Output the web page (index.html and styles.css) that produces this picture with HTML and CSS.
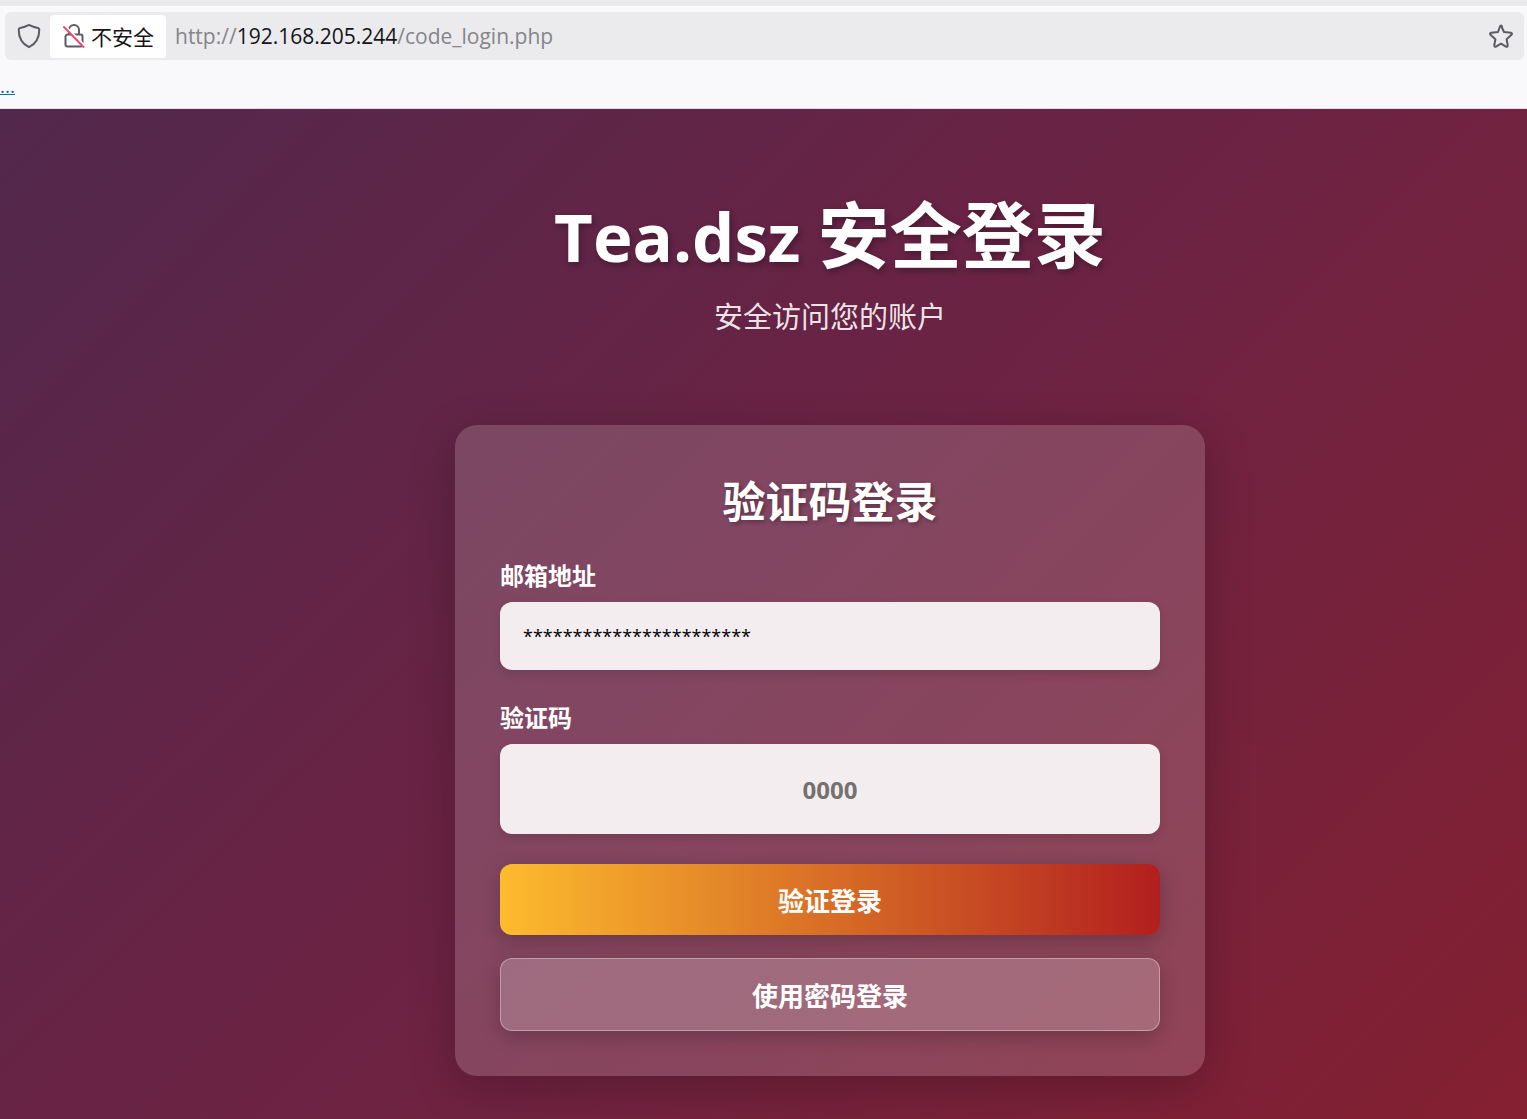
FILE: index.html
```html
<!DOCTYPE html>
<html lang="zh-CN">
<head>
<meta charset="utf-8">
<meta name="viewport" content="width=device-width, initial-scale=1">
<title>Tea.dsz 安全登录</title>
<link rel="stylesheet" href="styles.css">
</head>
<body>
<header class="browser">
  <div class="toolbar">
    <div class="urlbar">
      <svg class="icon shield" viewBox="0 0 24 26" aria-hidden="true"><path d="M12 2 C13.500 2 14 3.600 21 5 Q22.300 5.300 22.300 6.600 C22.300 15 19 21 12 24.200 C5 21 1.700 15 1.700 6.600 Q1.700 5.300 3 5 C10 3.600 10.500 2 12 2Z"/></svg>
      <button class="security" type="button">
        <svg class="icon lock" viewBox="0 0 22 26" aria-hidden="true"><path d="M6 11V7a5 5 0 0 1 10 0V11M4.500 11.500h13a2 2 0 0 1 2 2v8a2 2 0 0 1-2 2h-13a2 2 0 0 1-2-2v-8a2 2 0 0 1 2-2Z"/><path class="halo" d="M2.500 3.500 22 23"/><path class="slash" d="M1 4 20.500 24"/></svg>
        <span>不安全</span>
      </button>
      <div class="address">http://<span class="host">192.168.205.244</span>/code_login.php</div>
      <svg class="icon star" viewBox="0 0 26 26" aria-hidden="true"><path d="M13 2.500 16 9l6.800.8c1.300.2 1.500 1.300.7 2L18.600 16.300l1.100 6c.2 1.300-.8 1.800-1.700 1.300L13 20.700l-5 2.900c-.9.500-1.900 0-1.700-1.300l1.100-6L2.500 11.800c-.8-.7-.6-1.800.7-2L10 9l2-5.500c.5-1.200 1.500-1.200 2 0"/></svg>
    </div>
  </div>
  <nav class="bookmarks"><a href="#">...</a></nav>
</header>
<main class="page">
  <div class="content">
    <h1><span class="brand">Tea.dsz </span>安全登录</h1>
    <p class="subtitle">安全访问您的账户</p>
    <form class="card">
      <h2>验证码登录</h2>
      <div class="field">
        <label for="email">邮箱地址</label>
        <input id="email" type="text" value="***********************">
      </div>
      <div class="field">
        <label for="code">验证码</label>
        <input id="code" class="code" type="text" placeholder="0000">
      </div>
      <div class="actions">
        <button class="btn primary" type="button">验证登录</button>
        <button class="btn secondary" type="button">使用密码登录</button>
      </div>
    </form>
  </div>
</main>
</body>
</html>
```
FILE: styles.css
```css
* { box-sizing: border-box; }

body {
  margin: 0;
  min-height: 100vh;
  display: flex;
  flex-direction: column;
  font-family: "Open Sans", "Noto Sans CJK SC", sans-serif;
}

button, input { font-family: inherit; }

.browser {
  background: #f9f9fb;
  border-top: 6px solid #e9e9ec;
  border-bottom: 1px solid #e8dde6;
}

.toolbar { padding: 6px 3px 0 5px; }

.urlbar {
  display: flex;
  align-items: center;
  height: 48px;
  padding: 0 10px 0 12px;
  border-radius: 6px;
  background: #ebebed;
}

.icon {
  flex: none;
  fill: none;
  stroke: #5b5b62;
  stroke-width: 2;
  stroke-linecap: round;
  stroke-linejoin: round;
}

.shield { width: 24px; height: 26px; }
.lock { width: 22px; height: 26px; }
.star { width: 26px; height: 26px; }
.lock .halo { stroke: #fff; }
.lock .slash { stroke: #ec4a7a; }

.security {
  display: flex;
  align-items: center;
  gap: 6px;
  height: 43px;
  margin-left: 9px;
  padding: 0 12px 0 13px;
  border: 0;
  border-radius: 4px;
  background: #fff;
  color: #15141a;
  font-size: 21px;
  white-space: nowrap;
}

.address {
  flex: 1;
  margin-left: 9px;
  color: #85858a;
  font-size: 21px;
}

.host { color: #15141a; }

.bookmarks {
  height: 48px;
  padding-top: 14px;
  font-size: 19px;
  line-height: 24px;
}

.bookmarks a { color: #0f6c9c; }

.page {
  flex: 1;
  padding: 80px 0 43px 133px;
  background: linear-gradient(135deg, #52284c 0%, #6a2344 45%, #76223c 72%, #852031 100%);
  color: #fff;
}

.content {
  max-width: 750px;
  margin: 0 auto;
  text-align: center;
}

h1 {
  margin: 0;
  font-size: 72px;
  line-height: 90px;
  text-shadow: 2px 3px 6px rgba(0, 0, 0, 0.3);
}

.brand { font-size: 67px; }

.subtitle {
  margin: 14px 0 86px;
  font-size: 29px;
  line-height: 44px;
  color: rgba(255, 255, 255, 0.9);
}

.card {
  padding: 45px;
  border-radius: 22px;
  background: rgba(255, 255, 255, 0.16);
  box-shadow: 0 12px 46px rgba(0, 0, 0, 0.22);
}

h2 {
  margin: 0 0 24px;
  font-size: 43px;
  line-height: 64px;
  text-shadow: 2px 2px 4px rgba(0, 0, 0, 0.3);
}

.field {
  display: flex;
  flex-direction: column;
  gap: 8px;
  margin-bottom: 30px;
  text-align: left;
}

label {
  font-size: 24px;
  font-weight: 700;
  line-height: 36px;
}

input {
  width: 100%;
  height: 68px;
  padding: 0 23px;
  border: 0;
  border-radius: 12px;
  background: rgba(255, 255, 255, 0.9);
  box-shadow: 0 4px 10px rgba(0, 0, 0, 0.12);
  color: #000;
  font-size: 18px;
}

.code {
  height: 90px;
  font-size: 24px;
  font-weight: 700;
  text-align: center;
}

.code::placeholder { color: #757171; }

.actions {
  display: flex;
  flex-direction: column;
  gap: 23px;
}

.btn {
  height: 71px;
  border: 0;
  border-radius: 12px;
  box-shadow: 0 6px 20px rgba(0, 0, 0, 0.22);
  color: #fff;
  font-size: 26px;
  font-weight: 700;
}

.primary { background: linear-gradient(90deg, #fdbb2d, #b21f1f); }

.secondary {
  height: 73px;
  border: 1px solid rgba(255, 255, 255, 0.35);
  background: rgba(255, 255, 255, 0.2);
}
```
